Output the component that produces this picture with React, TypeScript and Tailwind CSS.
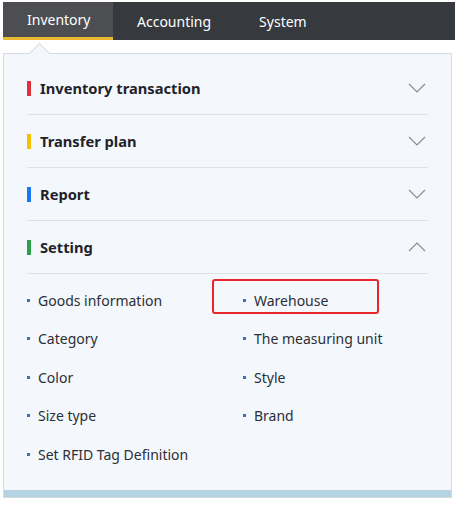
import React from "react";

const sections = [
  { title: "Inventory transaction", color: "bg-[#e0303d]", open: false },
  { title: "Transfer plan", color: "bg-[#f7c000]", open: false },
  { title: "Report", color: "bg-[#1778f2]", open: false },
  { title: "Setting", color: "bg-[#2e9e48]", open: true },
];

const items: [string, string | null][] = [
  ["Goods information", "Warehouse"],
  ["Category", "The measuring unit"],
  ["Color", "Style"],
  ["Size type", "Brand"],
  ["Set RFID Tag Definition", null],
];

function Chevron({ up }: { up: boolean }) {
  return (
    <svg width="18" height="10" viewBox="0 0 18 10" fill="none">
      <path
        d={up ? "M1 9 L9 1 L17 9" : "M1 1 L9 9 L17 1"}
        stroke="#8a8d93"
        strokeWidth="1.2"
      />
    </svg>
  );
}

function Item({ label, highlight }: { label: string; highlight?: boolean }) {
  return (
    <div className="relative flex items-center h-[38.5px]">
      <span className="w-[3px] h-[3px] bg-[#3b6fb6] mr-[8px]" />
      <span className="text-[14px] text-[#2b2f36]">{label}</span>
      {highlight && (
        <div className="absolute left-[-31px] top-[-2px] w-[167px] h-[35px] border-2 border-[#e8262a] rounded-[3px]" />
      )}
    </div>
  );
}

export default function App() {
  return (
    <div
      className="w-[455px] h-[505px] bg-white overflow-hidden"
      style={{ fontFamily: '"Noto Sans", "Open Sans", sans-serif' }}
    >
      <nav className="ml-[3px] mt-[2px] h-[38px] bg-[#36393e] flex text-white text-[14px]">
        <div className="w-[110px] bg-[#4c4e52] border-b-[3px] border-[#e9b931] flex items-center pl-[24px]">
          Inventory
        </div>
        <div className="flex items-center px-[24px]">Accounting</div>
        <div className="flex items-center px-[24px]">System</div>
      </nav>
      <div className="relative mt-[13px] mx-[3px] border border-[#d5dbe3] bg-[#f4f8fd]">
        <div className="absolute left-[28px] top-[-8px] w-[15px] h-[15px] rotate-45 bg-[#f4f8fd] border-l border-t border-[#d5dbe3]" />
        <div className="relative px-[23px] pt-[8px]">
          {sections.map((s) => (
            <div
              key={s.title}
              className="h-[53px] flex items-center border-b border-[#dde2e8]"
            >
              <span className={`w-[4px] h-[15px] ${s.color} mr-[9px]`} />
              <span className="flex-1 font-bold text-[14.7px] text-[#1f2329]">
                {s.title}
              </span>
              <span className="mr-[2px] flex items-center">
                <Chevron up={s.open} />
              </span>
            </div>
          ))}
          <div className="grid grid-cols-[216px_1fr] pt-[7px] pb-[16px]">
            {items.map(([a, b]) => (
              <React.Fragment key={a}>
                <Item label={a} />
                {b ? <Item label={b} highlight={b === "Warehouse"} /> : <div />}
              </React.Fragment>
            ))}
          </div>
        </div>
        <div className="h-[7px] bg-[#b4d4e4]" />
      </div>
    </div>
  );
}
